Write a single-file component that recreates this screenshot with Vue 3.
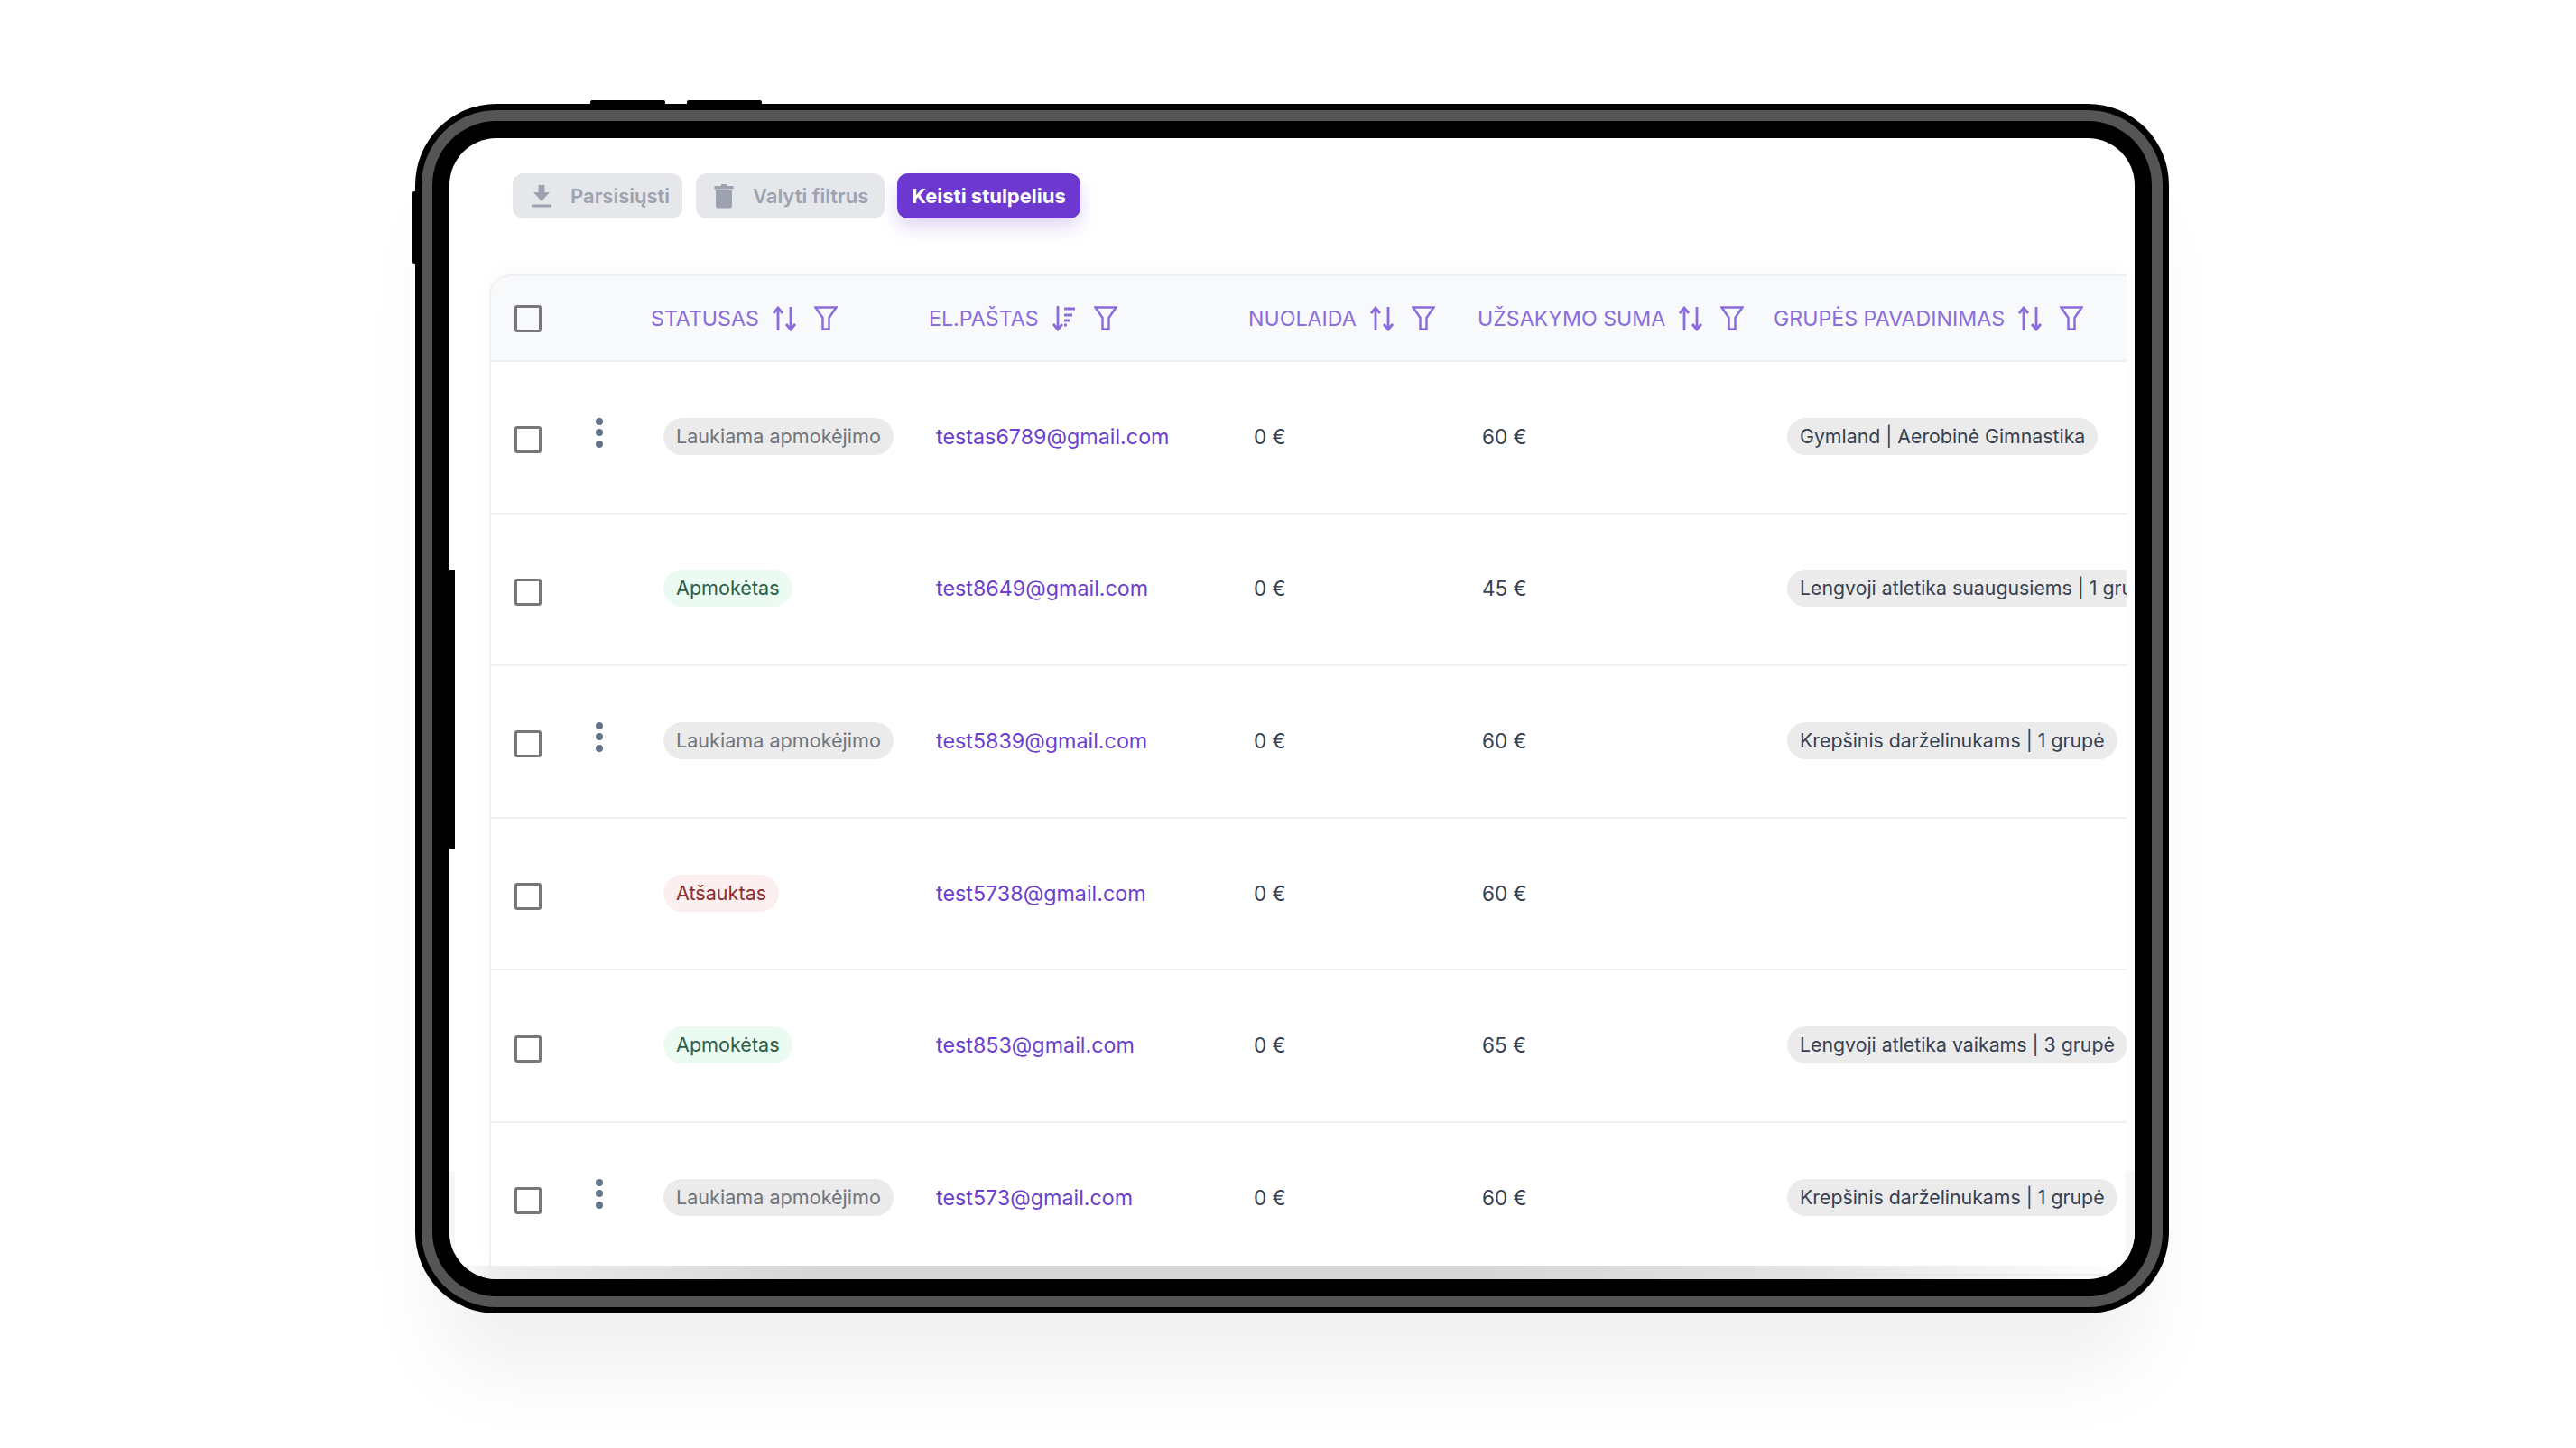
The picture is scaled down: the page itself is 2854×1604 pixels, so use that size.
<script setup>
const columns = [
  { label: 'Statusas', sort: 'both' },
  { label: 'El.paštas', sort: 'desc' },
  { label: 'Nuolaida', sort: 'both' },
  { label: 'Užsakymo suma', sort: 'both' },
  { label: 'Grupės pavadinimas', sort: 'both' }
]
const rows = [
  { menu: true, status: 'Laukiama apmokėjimo', tone: 'wait', email: 'testas6789@gmail.com', discount: '0 €', sum: '60 €', group: 'Gymland | Aerobinė Gimnastika' },
  { menu: false, status: 'Apmokėtas', tone: 'paid', email: 'test8649@gmail.com', discount: '0 €', sum: '45 €', group: 'Lengvoji atletika suaugusiems | 1 grupė' },
  { menu: true, status: 'Laukiama apmokėjimo', tone: 'wait', email: 'test5839@gmail.com', discount: '0 €', sum: '60 €', group: 'Krepšinis darželinukams | 1 grupė' },
  { menu: false, status: 'Atšauktas', tone: 'cancel', email: 'test5738@gmail.com', discount: '0 €', sum: '60 €', group: '' },
  { menu: false, status: 'Apmokėtas', tone: 'paid', email: 'test853@gmail.com', discount: '0 €', sum: '65 €', group: 'Lengvoji atletika vaikams | 3 grupė' },
  { menu: true, status: 'Laukiama apmokėjimo', tone: 'wait', email: 'test573@gmail.com', discount: '0 €', sum: '60 €', group: 'Krepšinis darželinukams | 1 grupė' }
]
</script>

<template>
  <div class="page">
    <div class="device">
      <span class="top-key first"></span>
      <span class="top-key second"></span>
      <span class="side-key"></span>
      <div class="ring">
        <div class="bezel">
          <span class="inner-key"></span>
          <main class="screen">
            <div class="toolbar">
              <button class="btn muted dl">
                <svg width="24" height="26" viewBox="0 0 24 26"><path d="M8.5 1h7v8h5.500l-9 10-9-10h5.500z" fill="#9ca3af"/><rect x="1" y="22.500" width="22" height="3" fill="#9ca3af"/></svg>
                Parsisiųsti
              </button>
              <button class="btn muted tr">
                <svg width="22" height="28" viewBox="0 0 22 28"><path d="M0.500 3h7l1-2h5l1 2h7v3.500h-21z" fill="#9ca3af"/><path d="M2 8h18v17a2.500 2.500 0 0 1-2.500 2.500h-13a2.500 2.500 0 0 1-2.500-2.500z" fill="#9ca3af"/></svg>
                Valyti filtrus
              </button>
              <button class="btn primary">Keisti stulpelius</button>
            </div>

            <section class="table">
              <div class="row head">
                <div class="check-cell"><span class="check"></span></div>
                <div v-for="c in columns" :key="c.label" class="head-cell">
                  <span class="head-label">{{ c.label }}</span>
                  <svg v-if="c.sort === 'both'" class="sort" width="26" height="28" viewBox="0 0 26 28" fill="none" stroke="#8a6ddb" stroke-width="2.800">
                    <path d="M6 27V2M1 8l5-6 5 6"/><path d="M20 1v25M15 20l5 6 5-6"/>
                  </svg>
                  <svg v-else class="sort" width="26" height="28" viewBox="0 0 26 28" fill="none" stroke="#8a6ddb" stroke-width="2.800">
                    <path d="M6 0v26M1 20l5 6 5-6"/><path d="M13 3h12M13 10h9M13 16h6M13 21h3"/>
                  </svg>
                  <svg class="funnel" width="26" height="27" viewBox="0 0 26 27" fill="none" stroke="#8a6ddb" stroke-width="2.500">
                    <path d="M1.500 1.500h23l-8 11.500v12.500h-7v-12.500z"/>
                  </svg>
                </div>
              </div>

              <div v-for="r in rows" :key="r.email" class="row body">
                <div class="check-cell"><span class="check low"></span></div>
                <div class="menu-cell">
                  <span v-if="r.menu" class="dots"><i></i><i></i><i></i></span>
                </div>
                <div class="cell status-cell"><span class="pill" :class="r.tone">{{ r.status }}</span></div>
                <div class="cell email-cell">{{ r.email }}</div>
                <div class="cell discount-cell">{{ r.discount }}</div>
                <div class="cell sum-cell">{{ r.sum }}</div>
                <div class="cell group-cell"><span v-if="r.group" class="pill group">{{ r.group }}</span></div>
              </div>
            </section>

            <span class="scroll-x"></span>
            <span class="scroll-y left"></span>
            <span class="scroll-y right"></span>
          </main>
        </div>
      </div>
    </div>
  </div>
</template>

<style>
html, body { margin: 0; background: #fff; }
</style>

<style scoped>
.page {
  width: 2854px;
  height: 1604px;
  box-sizing: border-box;
  padding: 115px 0 0 460px;
  overflow: hidden;
  background: #fff;
  font-family: Inter, "Liberation Sans", sans-serif;
}
.device {
  position: relative;
  width: 1943px;
  height: 1340px;
  box-sizing: border-box;
  padding: 7px;
  background: #000;
  border-radius: 90px;
  box-shadow: 0 90px 90px -25px rgba(0, 0, 0, 0.06);
}
.ring {
  height: 100%;
  box-sizing: border-box;
  padding: 12px;
  background: #555;
  border-radius: 83px;
}
.bezel {
  position: relative;
  height: 100%;
  box-sizing: border-box;
  padding: 19px;
  background: #000;
  border-radius: 71px;
}
.top-key {
  position: absolute;
  top: -4px;
  width: 83px;
  height: 4px;
  background: #000;
  border-radius: 2px 2px 0 0;
}
.top-key.first { left: 194px; }
.top-key.second { left: 301px; }
.side-key {
  position: absolute;
  left: -3px;
  top: 97px;
  width: 3px;
  height: 80px;
  background: #000;
  border-radius: 2px 0 0 2px;
}
.inner-key {
  position: absolute;
  z-index: 3;
  left: 19px;
  top: 497px;
  width: 6px;
  height: 309px;
  background: #000;
}
.screen {
  position: relative;
  height: 100%;
  overflow: hidden;
  background: #fff;
  border-radius: 52px;
}
.toolbar {
  display: flex;
  height: 50px;
  padding: 39px 0 0 70px;
}
.btn {
  display: flex;
  align-items: center;
  height: 50px;
  box-sizing: border-box;
  border: 0;
  border-radius: 12px;
  font-family: inherit;
  font-size: 22px;
  font-weight: 600;
  white-space: nowrap;
}
.muted { background: #e5e7eb; color: #9ca3af; }
.dl { width: 188px; padding: 0 0 0 20px; gap: 20px; }
.tr { width: 209px; margin-left: 15px; padding: 0 0 0 20px; gap: 21px; }
.primary {
  width: 203px;
  margin-left: 14px;
  justify-content: center;
  padding: 0;
  background: #6c38cf;
  color: #fff;
  font-weight: 700;
  box-shadow: 0 10px 20px rgba(108, 56, 207, 0.2);
}
.table {
  width: 1814px;
  margin: 62px 0 0 44px;
  box-sizing: border-box;
  border-left: 2px solid #f0f0f2;
  border-radius: 22px 0 0 0;
  overflow: hidden;
  box-shadow: 0 -8px 24px rgba(0, 0, 0, 0.02);
}
.row {
  display: grid;
  align-items: center;
}
.head {
  grid-template-columns: 177px 308px 354px 254px 328px 1fr;
  height: 97px;
  box-sizing: border-box;
  border-top: 2px solid #eeeff2;
  border-bottom: 2px solid #eeeff2;
  border-radius: 22px 0 0 0;
  background: #f8f9fb;
}
.body {
  grid-template-columns: 94px 84px 308px 354px 254px 328px 1fr;
  height: 168.600px;
  box-sizing: border-box;
  border-bottom: 2px solid #f0f0f2;
}
.check-cell { padding-left: 26px; display: flex; }
.check {
  width: 30px;
  height: 30px;
  box-sizing: border-box;
  border: 3px solid #77777b;
  border-radius: 3px;
}
.check.low { position: relative; top: 3px; }
.head-cell {
  display: flex;
  align-items: center;
  white-space: nowrap;
}
.head-label {
  color: #8a6ddb;
  font-size: 23.200px;
  text-transform: uppercase;
}
.sort { margin-left: 15px; flex: none; }
.funnel { margin-left: 20px; flex: none; }
.menu-cell {
  display: flex;
  padding-left: 22px;
}
.dots {
  display: flex;
  flex-direction: column;
  gap: 4.500px;
  position: relative;
  top: -5px;
}
.dots i {
  display: block;
  width: 8px;
  height: 8px;
  border-radius: 50%;
  background: #64748b;
}
.cell {
  white-space: nowrap;
  color: #374151;
  font-size: 22.500px;
  position: relative;
  top: -1px;
}
.status-cell { padding-left: 13px; }
.email-cell { padding-left: 7px; color: #6c3fcf; font-size: 23.300px; }
.discount-cell { padding-left: 5px; }
.sum-cell { padding-left: 4px; }
.group-cell { padding-left: 14px; }
.pill {
  display: inline-block;
  height: 41px;
  box-sizing: border-box;
  padding: 0 14px;
  border-radius: 21px;
  font-size: 21.600px;
  line-height: 41px;
}
.wait { background: #ebebeb; color: #71757c; }
.paid { background: #ecfbf2; color: #2b5e47; }
.cancel { background: #fbf0ef; color: #8c2f33; }
.group { background: #ebebeb; color: #374151; font-size: 21.300px; }
.scroll-x {
  position: absolute;
  left: 0;
  right: 0;
  bottom: 0;
  height: 15px;
  background: linear-gradient(90deg, rgba(230, 230, 230, 0) 0%, #ececec 3%, #d6d6d6 22%, #d6d6d6 60%, #e2e2e2 80%, rgba(230, 230, 230, 0) 100%);
}
.scroll-y {
  position: absolute;
  top: 1144px;
  bottom: 0;
  background: #f6f6f6;
}
.scroll-y.left { left: 0; width: 6px; }
.scroll-y.right { right: 0; width: 10px; }
</style>
